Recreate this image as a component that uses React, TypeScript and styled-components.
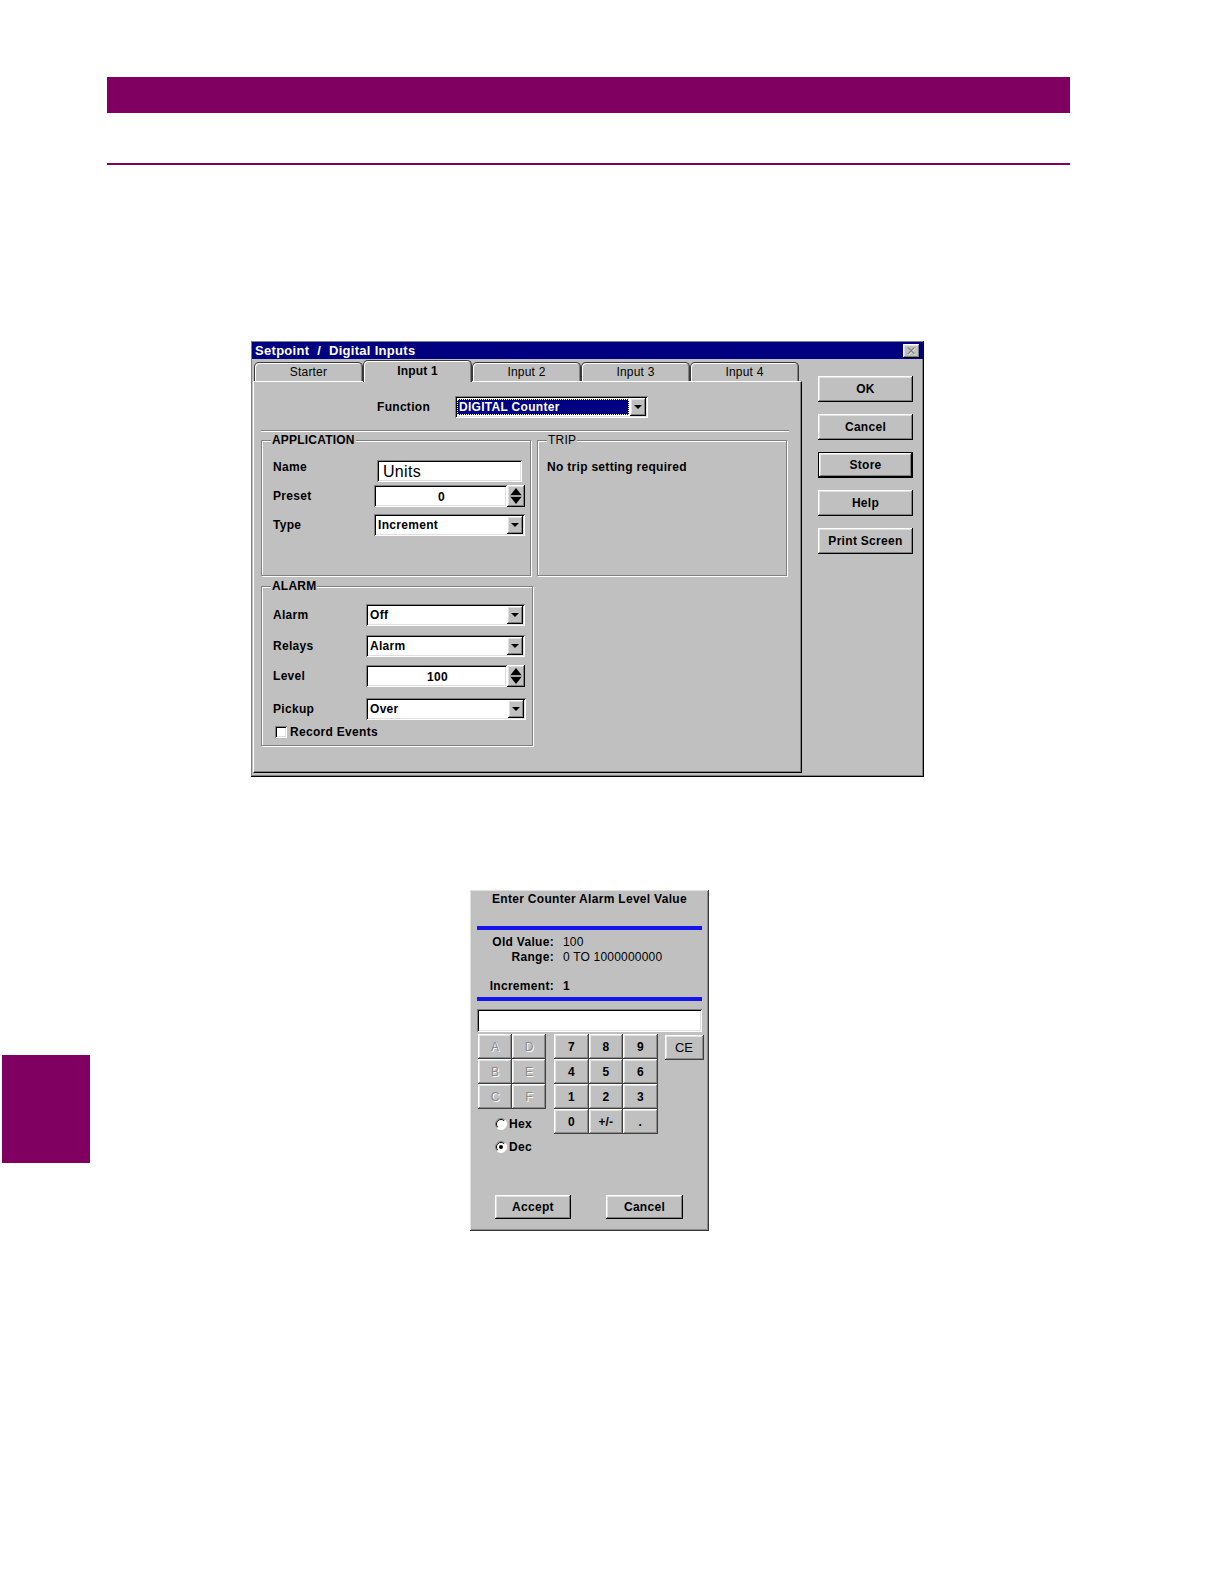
import React from 'react';
import styled, { createGlobalStyle, css } from 'styled-components';

const PLUM = '#7f0060';
const FACE = '#c0c0c0';
const UI_FONT = '"Liberation Sans", Arial, sans-serif';

const GlobalStyle = createGlobalStyle`
  html, body {
    margin: 0;
    padding: 0;
    background: #fff;
  }
  body {
    font-family: ${UI_FONT};
    color: #000;
  }
`;

const raised = css`
  box-shadow: inset -1px -1px #000, inset 1px 1px #fff, inset -2px -2px #808080, inset 2px 2px #dfdfdf;
`;

const raisedSoft = css`
  box-shadow: inset -1px -1px #404040, inset 1px 1px #fff, inset -2px -2px #8c8c8c, inset 2px 2px #e4e4e4;
`;

const sunken = css`
  box-shadow: inset 1px 1px #808080, inset -1px -1px #fff, inset 2px 2px #000, inset -2px -2px #dfdfdf;
`;

/* ---------- page furniture ---------- */

const Page = styled.div`
  display: flex;
  flex-direction: column;
  padding-bottom: 40px;
`;

const HeaderBar = styled.div`
  margin: 77px 0 0 107px;
  width: 963px;
  height: 36px;
  background: ${PLUM};
`;

const HeaderRule = styled.div`
  margin: 50px 0 0 107px;
  width: 963px;
  height: 2px;
  background: ${PLUM};
`;

const LowerRow = styled.div`
  display: flex;
  align-items: flex-start;
  margin-top: 113px;
`;

const SideTab = styled.div`
  margin: 165px 0 0 2px;
  width: 88px;
  height: 108px;
  background: ${PLUM};
`;

/* ---------- setpoint window ---------- */

const Window = styled.div`
  box-sizing: border-box;
  margin: 176px 0 0 251px;
  width: 673px;
  height: 436px;
  padding: 1px;
  background: ${FACE};
  box-shadow: inset -1px -1px #000, inset 1px 1px #808080, inset -2px -2px #808080;
  display: flex;
  flex-direction: column;
`;

const TitleBar = styled.div`
  height: 17px;
  background: #000080;
  display: flex;
  align-items: center;
  justify-content: space-between;
  padding: 0 3px 0 3px;
`;

const TitleText = styled.span`
  color: #fff;
  font: bold 13px ${UI_FONT};
  letter-spacing: 0.3px;
  white-space: pre;
`;

const CloseBox = styled.div`
  box-sizing: border-box;
  width: 17px;
  height: 14px;
  background: ${FACE};
  ${raised}
  display: flex;
  align-items: center;
  justify-content: center;
`;

const WindowBody = styled.div`
  display: flex;
  margin-top: 1px;
`;

const TabColumn = styled.div`
  margin-left: 1px;
  width: 549px;
  display: flex;
  flex-direction: column;
`;

const TabStrip = styled.div`
  height: 21px;
  display: flex;
  align-items: flex-end;
  padding-left: 1px;
  position: relative;
  z-index: 1;
`;

const Tab = styled.div<{ $active?: boolean }>`
  box-sizing: border-box;
  width: 109px;
  height: ${(p) => (p.$active ? 22 : 19)}px;
  margin-bottom: ${(p) => (p.$active ? -1 : 0)}px;
  background: ${FACE};
  border: 1px solid #3a3a3a;
  border-bottom: none;
  border-radius: 5px 5px 0 0;
  box-shadow: inset 1px 1px #fff, inset -1px 0 #808080;
  display: flex;
  align-items: center;
  justify-content: center;
  padding-bottom: ${(p) => (p.$active ? 2 : 0)}px;
  font: ${(p) => (p.$active ? 'bold' : 'normal')} 12px ${UI_FONT};
  letter-spacing: 0.2px;
`;

const TabPanel = styled.div`
  box-sizing: border-box;
  height: 392px;
  background: ${FACE};
  border-top: 1px solid #fff;
  border-left: 1px solid #fff;
  border-right: 1px solid #000;
  border-bottom: 1px solid #000;
  box-shadow: inset -1px -1px #808080;
  padding: 14px 0 0 7px;
`;

const FunctionRow = styled.div`
  display: flex;
  align-items: center;
  height: 22px;
  margin-left: 116px;
`;

const Label = styled.span<{ $w?: number; $lift?: number }>`
  display: inline-block;
  width: ${(p) => p.$w ?? 0}px;
  flex-shrink: 0;
  font: bold 12px ${UI_FONT};
  letter-spacing: 0.3px;
  white-space: nowrap;
  margin-top: ${(p) => -(p.$lift ?? 0)}px;
`;

const Etched = styled.div`
  margin-top: 12px;
  width: 528px;
  border-top: 1px solid #808080;
  border-bottom: 1px solid #fff;
`;

const GroupRow = styled.div`
  display: flex;
  gap: 6px;
  margin-top: 2px;
`;

const Group = styled.fieldset<{ $w: number; $h: number; $top?: number; $pad?: number }>`
  box-sizing: border-box;
  margin: ${(p) => p.$top ?? 0}px 0 0 0;
  width: ${(p) => p.$w}px;
  height: ${(p) => p.$h}px;
  border: 1px solid #808080;
  box-shadow: inset 1px 1px #fff, 1px 1px #fff;
  padding: ${(p) => p.$pad ?? 12}px 0 0 11px;
  min-width: 0;
`;

const Legend = styled.legend<{ $bold?: boolean }>`
  padding: 0 1px;
  margin-left: -2px;
  background: ${FACE};
  font: ${(p) => (p.$bold ? 'bold' : 'normal')} 12px ${UI_FONT};
  line-height: 12px;
  letter-spacing: 0.2px;
`;

const FieldRow = styled.div<{ $gap?: number }>`
  display: flex;
  align-items: center;
  height: 22px;
  margin-top: ${(p) => p.$gap ?? 0}px;
`;

const TextBox = styled.div<{ $w: number; $align?: string; $large?: boolean }>`
  box-sizing: border-box;
  width: ${(p) => p.$w}px;
  height: 22px;
  background: #fff;
  ${sunken}
  display: flex;
  align-items: center;
  justify-content: ${(p) => p.$align ?? 'flex-start'};
  padding: 2px 4px 0 6px;
  font: ${(p) => (p.$large ? 'normal 16px' : 'bold 12px')} ${UI_FONT};
  letter-spacing: 0.3px;
`;

const Combo = styled.div<{ $w: number }>`
  box-sizing: border-box;
  width: ${(p) => p.$w}px;
  height: 22px;
  background: #fff;
  ${sunken}
  display: flex;
  padding: 2px;
`;

const ComboText = styled.div<{ $focus?: boolean }>`
  flex: 1;
  display: flex;
  align-items: center;
  padding-left: 2px;
  font: bold 12px ${UI_FONT};
  letter-spacing: 0.3px;
  ${(p) =>
    p.$focus &&
    css`
      margin: 1px 1px 1px 0;
      padding-left: 2px;
      background: #000080;
      color: #fff;
      outline: 1px dotted #fff;
      outline-offset: -1px;
    `}
`;

const DropButton = styled.div`
  box-sizing: border-box;
  width: 16px;
  background: ${FACE};
  ${raised}
  display: flex;
  align-items: center;
  justify-content: center;
  &::after {
    content: '';
    width: 0;
    height: 0;
    border-left: 4px solid transparent;
    border-right: 4px solid transparent;
    border-top: 4px solid #000;
  }
`;

const SpinButton = styled.div`
  box-sizing: border-box;
  width: 18px;
  height: 22px;
  background: ${FACE};
  ${raised}
  display: flex;
  align-items: center;
  justify-content: center;
`;

const TripText = styled.div`
  padding: 2px 0 0 0;
  margin-left: -2px;
  font: bold 12px ${UI_FONT};
  letter-spacing: 0.3px;
`;

const CheckRow = styled.label`
  display: flex;
  align-items: center;
  gap: 3px;
  height: 13px;
  margin: 5px 0 0 2px;
  font: bold 12px ${UI_FONT};
  letter-spacing: 0.3px;
`;

const CheckBox = styled.span`
  box-sizing: border-box;
  width: 12px;
  height: 12px;
  background: #fff;
  ${sunken}
`;

const SideButtons = styled.div`
  margin-left: 16px;
  padding-top: 16px;
  display: flex;
  flex-direction: column;
  gap: 12px;
`;

const Button = styled.button<{ $w?: number; $h?: number; $default?: boolean }>`
  box-sizing: border-box;
  width: ${(p) => p.$w ?? 95}px;
  height: ${(p) => p.$h ?? 26}px;
  padding: 0;
  border: ${(p) => (p.$default ? '1px solid #000' : 'none')};
  background: ${FACE};
  ${raised}
  font: bold 12px ${UI_FONT};
  letter-spacing: 0.3px;
  color: #000;
`;

/* ---------- keypad dialog ---------- */

const Keypad = styled.div`
  box-sizing: border-box;
  margin-left: 380px;
  width: 239px;
  height: 341px;
  padding: 2px;
  background: ${FACE};
  box-shadow: inset -1px -1px #3a3a3a, inset 1px 1px #e0e0e0, inset -2px -2px #8a8a8a;
`;

const KeypadTitle = styled.div`
  height: 14px;
  line-height: 14px;
  text-align: center;
  font: bold 12px ${UI_FONT};
  letter-spacing: 0.3px;
`;

const BlueRule = styled.div<{ $top: number }>`
  margin: ${(p) => p.$top}px 0 0 5px;
  width: 225px;
  height: 4px;
  background: #1414ee;
`;

const InfoRow = styled.div<{ $top: number }>`
  display: flex;
  height: 15px;
  line-height: 15px;
  margin: ${(p) => p.$top}px 0 0 5px;
  font: 12px ${UI_FONT};
`;

const InfoLabel = styled.span`
  width: 77px;
  text-align: right;
  font-weight: bold;
  letter-spacing: 0.3px;
  margin-right: 9px;
`;

const InfoValue = styled.span<{ $bold?: boolean }>`
  font-weight: ${(p) => (p.$bold ? 'bold' : 'normal')};
  letter-spacing: 0.2px;
`;

const EntryBox = styled.div`
  box-sizing: border-box;
  margin: 8px 0 0 5px;
  width: 225px;
  height: 23px;
  background: #fff;
  ${sunken}
`;

const KeyArea = styled.div`
  display: flex;
  align-items: flex-start;
  margin: 2px 0 0 6px;
`;

const LeftKeys = styled.div`
  display: flex;
  flex-direction: column;
`;

const KeyGrid = styled.div<{ $cols: number; $colW: number; $gapLeft?: number }>`
  display: grid;
  grid-template-columns: repeat(${(p) => p.$cols}, ${(p) => p.$colW}px);
  grid-auto-rows: 25px;
  margin-left: ${(p) => p.$gapLeft ?? 0}px;
`;

const Key = styled.button<{ $disabled?: boolean }>`
  box-sizing: border-box;
  border: none;
  padding: 0;
  background: ${FACE};
  ${raisedSoft}
  font: ${(p) => (p.$disabled ? 'normal' : 'bold')} 12px ${UI_FONT};
  color: ${(p) => (p.$disabled ? '#8a8a8a' : '#000')};
  text-shadow: ${(p) => (p.$disabled ? '1px 1px #fff' : 'none')};
`;

const ClearKey = styled(Key)`
  margin: 1px 0 0 7px;
  width: 39px;
  height: 25px;
  font-weight: normal;
  font-size: 13px;
`;

const RadioList = styled.div`
  margin: 3px 0 0 17px;
  display: flex;
  flex-direction: column;
`;

const RadioRow = styled.label`
  display: flex;
  align-items: center;
  gap: 2px;
  height: 23px;
  font: bold 12px ${UI_FONT};
  letter-spacing: 0.3px;
`;

const DialogButtons = styled.div`
  display: flex;
  gap: 35px;
  margin: 37px 0 0 23px;
`;

/* ---------- small drawings ---------- */

const CloseGlyph = () => (
  <svg width="9" height="8" viewBox="0 0 9 8">
    <path d="M1.5 1 L8 7.5 M8 1 L1.5 7.5" stroke="#fff" strokeWidth="1.4" />
    <path d="M1 0.5 L7.5 7 M7.5 0.5 L1 7" stroke="#808080" strokeWidth="1.4" />
  </svg>
);

const SpinGlyph = () => (
  <svg width="12" height="18" viewBox="0 0 12 18">
    <path d="M6 1 L11.5 8 H0.5 Z" fill="#000" />
    <line x1="0" y1="9" x2="12" y2="9" stroke="#808080" />
    <path d="M0.5 10 H11.5 L6 17 Z" fill="#000" />
  </svg>
);

const Radio = ({ checked }: { checked?: boolean }) => (
  <svg width="12" height="12" viewBox="0 0 12 12">
    <circle cx="6" cy="6" r="5.5" fill="#fff" />
    <path d="M2.1 9.9 A5.5 5.5 0 0 1 9.9 2.1" stroke="#808080" fill="none" />
    <path d="M2.8 9.2 A4.5 4.5 0 0 1 9.2 2.8" stroke="#000" fill="none" />
    <path d="M9.9 2.1 A5.5 5.5 0 0 1 2.1 9.9" stroke="#fff" fill="none" />
    {checked && <circle cx="6" cy="6" r="2" fill="#000" />}
  </svg>
);

const ComboBox = ({ w, value, focus }: { w: number; value: string; focus?: boolean }) => (
  <Combo $w={w}>
    <ComboText $focus={focus}>{value}</ComboText>
    <DropButton />
  </Combo>
);

const SpinField = ({ w, value }: { w: number; value: string }) => (
  <>
    <TextBox $w={w} $align="center">
      {value}
    </TextBox>
    <SpinButton>
      <SpinGlyph />
    </SpinButton>
  </>
);

const tabs = ['Starter', 'Input 1', 'Input 2', 'Input 3', 'Input 4'];
const sideButtons = ['OK', 'Cancel', 'Store', 'Help', 'Print Screen'];
const hexKeys = ['A', 'D', 'B', 'E', 'C', 'F'];
const digitKeys = ['7', '8', '9', '4', '5', '6', '1', '2', '3', '0', '+/-', '.'];

export default function App() {
  return (
    <Page>
      <GlobalStyle />
      <HeaderBar />
      <HeaderRule />

      <Window>
        <TitleBar>
          <TitleText>{'Setpoint  /  Digital Inputs'}</TitleText>
          <CloseBox>
            <CloseGlyph />
          </CloseBox>
        </TitleBar>

        <WindowBody>
          <TabColumn>
            <TabStrip>
              {tabs.map((t) => (
                <Tab key={t} $active={t === 'Input 1'}>
                  {t}
                </Tab>
              ))}
            </TabStrip>
            <TabPanel>
              <FunctionRow>
                <Label $w={78}>Function</Label>
                <ComboBox w={193} value="DIGITAL Counter" focus />
              </FunctionRow>
              <Etched />

              <GroupRow>
                <Group $w={270} $h={142} $pad={14}>
                  <Legend $bold>APPLICATION</Legend>
                  <FieldRow>
                    <Label $w={104} $lift={8}>
                      Name
                    </Label>
                    <TextBox $w={145} $large>
                      Units
                    </TextBox>
                  </FieldRow>
                  <FieldRow $gap={3}>
                    <Label $w={101}>Preset</Label>
                    <SpinField w={133} value="0" />
                  </FieldRow>
                  <FieldRow $gap={7}>
                    <Label $w={101}>Type</Label>
                    <ComboBox w={151} value="Increment" />
                  </FieldRow>
                </Group>

                <Group $w={250} $h={142}>
                  <Legend>TRIP</Legend>
                  <TripText>No trip setting required</TripText>
                </Group>
              </GroupRow>

              <Group $w={272} $h={166} $top={4}>
                <Legend $bold>ALARM</Legend>
                <FieldRow>
                  <Label $w={93}>Alarm</Label>
                  <ComboBox w={159} value="Off" />
                </FieldRow>
                <FieldRow $gap={9}>
                  <Label $w={93}>Relays</Label>
                  <ComboBox w={159} value="Alarm" />
                </FieldRow>
                <FieldRow $gap={8}>
                  <Label $w={93}>Level</Label>
                  <SpinField w={141} value="100" />
                </FieldRow>
                <FieldRow $gap={11}>
                  <Label $w={93}>Pickup</Label>
                  <ComboBox w={160} value="Over" />
                </FieldRow>
                <CheckRow>
                  <CheckBox />
                  Record Events
                </CheckRow>
              </Group>
            </TabPanel>
          </TabColumn>

          <SideButtons>
            {sideButtons.map((b) => (
              <Button key={b} $default={b === 'Store'}>
                {b}
              </Button>
            ))}
          </SideButtons>
        </WindowBody>
      </Window>

      <LowerRow>
        <SideTab />
        <Keypad>
          <KeypadTitle>Enter Counter Alarm Level Value</KeypadTitle>
          <BlueRule $top={20} />
          <InfoRow $top={5}>
            <InfoLabel>Old Value:</InfoLabel>
            <InfoValue>100</InfoValue>
          </InfoRow>
          <InfoRow $top={0}>
            <InfoLabel>Range:</InfoLabel>
            <InfoValue>0 TO 1000000000</InfoValue>
          </InfoRow>
          <InfoRow $top={14}>
            <InfoLabel>Increment:</InfoLabel>
            <InfoValue $bold>1</InfoValue>
          </InfoRow>
          <BlueRule $top={3} />
          <EntryBox />

          <KeyArea>
            <LeftKeys>
              <KeyGrid $cols={2} $colW={34}>
                {hexKeys.map((k) => (
                  <Key key={k} $disabled>
                    {k}
                  </Key>
                ))}
              </KeyGrid>
              <RadioList>
                <RadioRow>
                  <Radio />
                  Hex
                </RadioRow>
                <RadioRow>
                  <Radio checked />
                  Dec
                </RadioRow>
              </RadioList>
            </LeftKeys>
            <KeyGrid $cols={3} $colW={34.5} $gapLeft={8}>
              {digitKeys.map((k) => (
                <Key key={k}>{k}</Key>
              ))}
            </KeyGrid>
            <ClearKey>CE</ClearKey>
          </KeyArea>

          <DialogButtons>
            <Button $w={76} $h={24}>
              Accept
            </Button>
            <Button $w={77} $h={24}>
              Cancel
            </Button>
          </DialogButtons>
        </Keypad>
      </LowerRow>
    </Page>
  );
}
